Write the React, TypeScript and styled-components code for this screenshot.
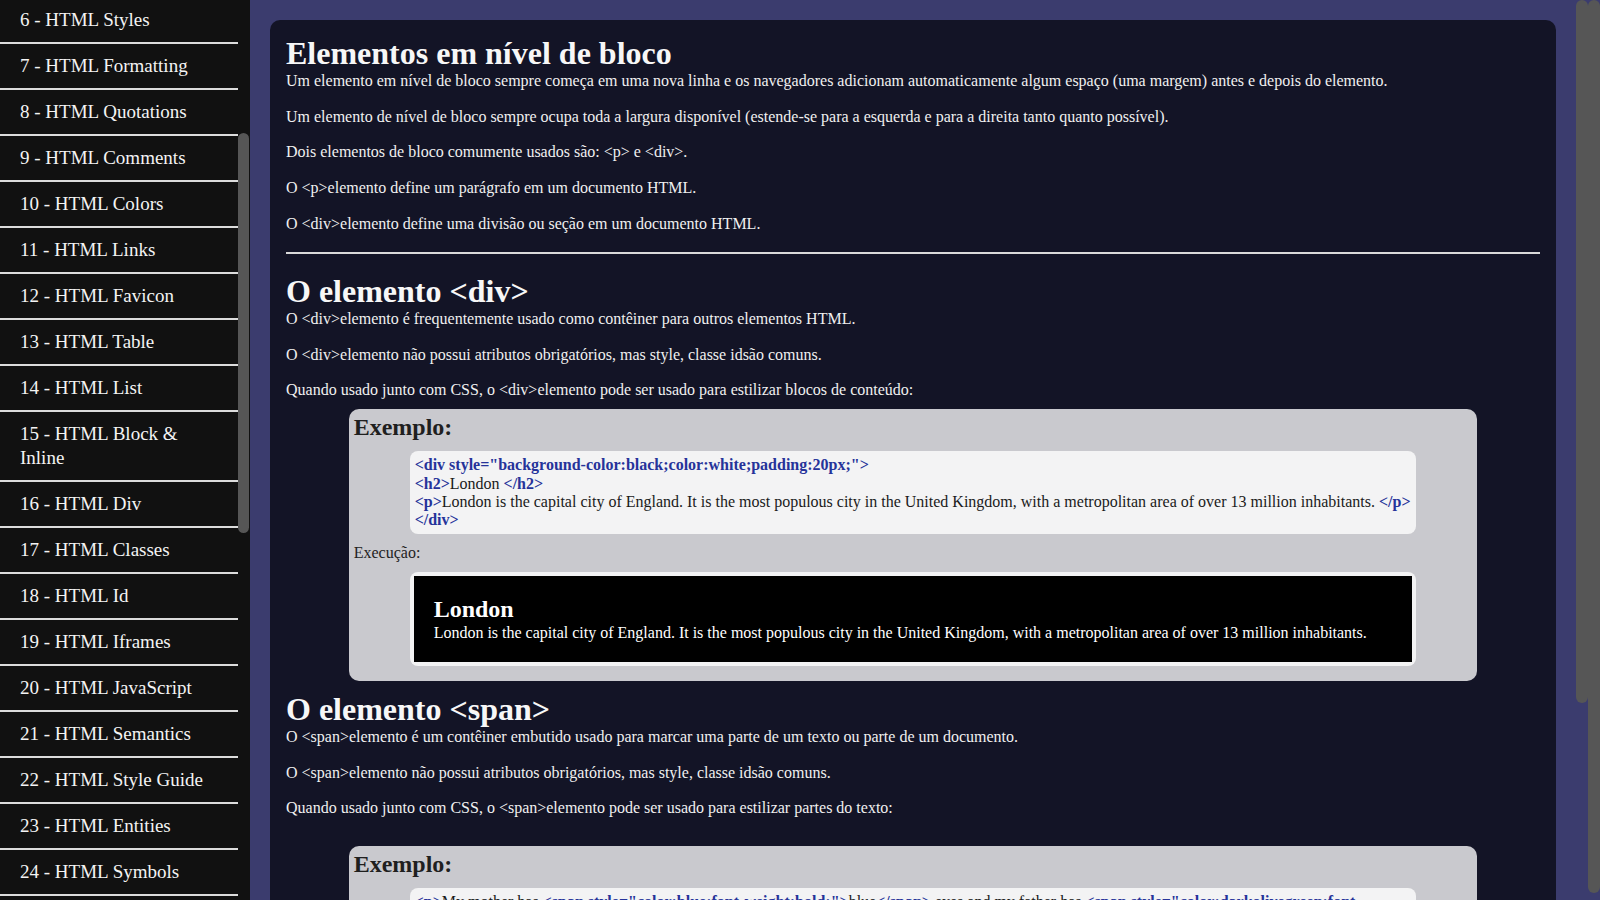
import React, { useLayoutEffect, useRef } from "react";
import styled, { createGlobalStyle } from "styled-components";

const GlobalStyle = createGlobalStyle`
  html {
    background: #3b3c6e;
  }
  body {
    margin: 0;
    overflow: hidden;
    font-family: "Liberation Serif", "Times New Roman", serif;
  }
`;

const Layout = styled.div`
  display: flex;
  height: 100vh;
  background: #3b3c6e;
`;

const Sidebar = styled.nav`
  flex: none;
  width: 250px;
  display: flex;
  background: #111111;
`;

const SideList = styled.div`
  position: relative;
  flex: 1;
  min-width: 0;
  overflow: hidden;
`;

const ScrollRail = styled.div<{ $bg: string }>`
  flex: none;
  width: 12px;
  display: flex;
  flex-direction: column;
  background: ${(p) => p.$bg};
`;

const Thumb = styled.div<{ $offset: number; $length: number; $inset?: number }>`
  margin-top: ${(p) => p.$offset}px;
  margin-right: ${(p) => p.$inset ?? 0}px;
  height: ${(p) => p.$length}px;
  background: #565656;
  border-radius: 6px;
`;

const SidebarHeader = styled.div`
  height: 67px;
  display: flex;
  align-items: center;
  padding: 0 20px;
  color: #ffffff;
  font-size: 24px;
  font-weight: bold;
`;

const NavItem = styled.a`
  display: block;
  padding: 10px 20px;
  font-size: 19px;
  line-height: 24px;
  color: #f4f4f4;
  text-decoration: none;
  border-bottom: 2px solid #dcdcdc;
`;

const Main = styled.main`
  flex: 1;
  min-width: 0;
  overflow: hidden;
  padding: 20px;
`;

const Card = styled.article`
  background: #131426;
  border-radius: 10px;
  padding: 15px 16px 80px;
  color: #f2f2f2;
`;

const Heading = styled.h1`
  margin: 0;
  font-size: 32px;
  font-weight: bold;
  line-height: 36.8px;
  color: #f7f7f7;
`;

const Text = styled.p`
  margin: 0;
  font-size: 16px;
  line-height: 18.4px;
  color: #f0f0f0;

  & + & {
    margin-top: 17.3px;
  }
`;

const Rule = styled.hr`
  margin: 19px 0;
  border: none;
  height: 2px;
  background: #d9d9d9;
`;

const ExampleBox = styled.section<{ $top: number }>`
  width: 90%;
  margin: ${(p) => p.$top}px auto 10px;
  padding: 5px;
  box-sizing: border-box;
  background: #c9c9ce;
  border-radius: 10px;
  color: #1c1c1c;
`;

const ExampleTitle = styled.h2`
  margin: 0;
  font-size: 24px;
  line-height: 27.6px;
  font-weight: bold;
  color: #1f1f1f;
`;

const CodeBox = styled.div`
  width: 90%;
  margin: 10px auto 0;
  padding: 5px 5px 4px;
  box-sizing: border-box;
  background: #f3f3f4;
  border-radius: 8px;
  font-size: 16px;
  line-height: 18.4px;
  color: #1a1a1a;
`;

const Tag = styled.span`
  color: #26339a;
  font-weight: bold;
`;

const RunLabel = styled.div`
  margin-top: 10px;
  font-size: 16px;
  line-height: 18.4px;
  color: #222222;
`;

const OutputFrame = styled.div`
  width: 90%;
  margin: 10px auto;
  padding: 4px;
  box-sizing: border-box;
  background: #f3f3f4;
  border-radius: 8px;
`;

const OutputBlack = styled.div`
  background: #000000;
  color: #ffffff;
  padding: 20px;
`;

const OutputTitle = styled.h2`
  margin: 0;
  font-size: 24px;
  line-height: 27.6px;
  font-weight: bold;
`;

const OutputText = styled.p`
  margin: 0;
  font-size: 16px;
  line-height: 18.4px;
`;

const OutputPlain = styled.p`
  margin: 0;
  padding: 20px;
  background: #ffffff;
  color: #000000;
  font-size: 16px;
  line-height: 18.4px;
`;

const Blue = styled.span`
  color: blue;
  font-weight: bold;
`;

const Olive = styled.span`
  color: darkolivegreen;
  font-weight: bold;
`;

const topics = [
  "HTML Introduction",
  "HTML Editors",
  "HTML Basic",
  "HTML Elements",
  "HTML Attributes",
  "HTML Styles",
  "HTML Formatting",
  "HTML Quotations",
  "HTML Comments",
  "HTML Colors",
  "HTML Links",
  "HTML Favicon",
  "HTML Table",
  "HTML List",
  "HTML Block & Inline",
  "HTML Div",
  "HTML Classes",
  "HTML Id",
  "HTML Iframes",
  "HTML JavaScript",
  "HTML Semantics",
  "HTML Style Guide",
  "HTML Entities",
  "HTML Symbols",
  "HTML Emojis",
  "HTML Charsets",
  "HTML URL Encode",
  "HTML vs. XHTML",
  "HTML Forms",
  "HTML Inputs",
  "HTML Canvas",
  "HTML SVG",
  "HTML Media",
  "HTML Video",
  "HTML Audio",
  "HTML Plugins",
  "HTML YouTube",
  "HTML Geolocation",
  "HTML Drag/Drop",
  "HTML Storage",
  "HTML Workers",
  "HTML SSE",
];

export default function App() {
  const sideRef = useRef<HTMLDivElement>(null);

  useLayoutEffect(() => {
    const side = sideRef.current;
    if (!side) return;
    const target = side.querySelector<HTMLElement>('[data-idx="6"]');
    if (target) side.scrollTop = target.offsetTop + 2;
  }, []);

  return (
    <>
      <GlobalStyle />
      <Layout>
        <Sidebar>
          <SideList ref={sideRef}>
            <SidebarHeader>Sumário</SidebarHeader>
            {topics.map((t, i) => (
              <NavItem key={t} href="#" data-idx={i + 1}>
                {i + 1} - {t}
              </NavItem>
            ))}
          </SideList>
          <ScrollRail $bg="#111111">
            <Thumb $offset={133} $length={400} $inset={1} />
          </ScrollRail>
        </Sidebar>
        <Main>
          <Card>
            <Heading>Elementos em nível de bloco</Heading>
            <Text>
              Um elemento em nível de bloco sempre começa em uma nova linha e os navegadores adicionam
              automaticamente algum espaço (uma margem) antes e depois do elemento.
            </Text>
            <Text>
              Um elemento de nível de bloco sempre ocupa toda a largura disponível (estende-se para a
              esquerda e para a direita tanto quanto possível).
            </Text>
            <Text>Dois elementos de bloco comumente usados são: &lt;p&gt; e &lt;div&gt;.</Text>
            <Text>O &lt;p&gt;elemento define um parágrafo em um documento HTML.</Text>
            <Text>O &lt;div&gt;elemento define uma divisão ou seção em um documento HTML.</Text>

            <Rule />

            <Heading>O elemento &lt;div&gt;</Heading>
            <Text>O &lt;div&gt;elemento é frequentemente usado como contêiner para outros elementos HTML.</Text>
            <Text>O &lt;div&gt;elemento não possui atributos obrigatórios, mas style, classe idsão comuns.</Text>
            <Text>
              Quando usado junto com CSS, o &lt;div&gt;elemento pode ser usado para estilizar blocos de
              conteúdo:
            </Text>

            <ExampleBox $top={9}>
              <ExampleTitle>Exemplo:</ExampleTitle>
              <CodeBox>
                <Tag>&lt;div style="background-color:black;color:white;padding:20px;"&gt;</Tag>
                <br />
                <Tag>&lt;h2&gt;</Tag>London <Tag>&lt;/h2&gt;</Tag>
                <br />
                <Tag>&lt;p&gt;</Tag>London is the capital city of England. It is the most populous city in
                the United Kingdom, with a metropolitan area of over 13 million inhabitants.{" "}
                <Tag>&lt;/p&gt;</Tag>
                <br />
                <Tag>&lt;/div&gt;</Tag>
              </CodeBox>
              <RunLabel>Execução:</RunLabel>
              <OutputFrame>
                <OutputBlack>
                  <OutputTitle>London</OutputTitle>
                  <OutputText>
                    London is the capital city of England. It is the most populous city in the United
                    Kingdom, with a metropolitan area of over 13 million inhabitants.
                  </OutputText>
                </OutputBlack>
              </OutputFrame>
            </ExampleBox>

            <Heading>O elemento &lt;span&gt;</Heading>
            <Text>
              O &lt;span&gt;elemento é um contêiner embutido usado para marcar uma parte de um texto ou parte
              de um documento.
            </Text>
            <Text>O &lt;span&gt;elemento não possui atributos obrigatórios, mas style, classe idsão comuns.</Text>
            <Text>
              Quando usado junto com CSS, o &lt;span&gt;elemento pode ser usado para estilizar partes do
              texto:
            </Text>

            <ExampleBox $top={28}>
              <ExampleTitle>Exemplo:</ExampleTitle>
              <CodeBox>
                <Tag>&lt;p&gt;</Tag>My mother has{" "}
                <Tag>&lt;span style="color:blue;font-weight:bold;"&gt;</Tag>blue<Tag>&lt;/span&gt;</Tag> eyes
                and my father has <Tag>&lt;span style="color:darkolivegreen;font-weight:bold;"&gt;</Tag>dark
                green<Tag>&lt;/span&gt;</Tag> eyes.<Tag>&lt;/p&gt;</Tag>
              </CodeBox>
              <RunLabel>Execução:</RunLabel>
              <OutputFrame>
                <OutputPlain>
                  My mother has <Blue>blue</Blue> eyes and my father has <Olive>dark green</Olive> eyes.
                </OutputPlain>
              </OutputFrame>
            </ExampleBox>
          </Card>
        </Main>
        <ScrollRail $bg="transparent">
          <Thumb $offset={0} $length={703} />
        </ScrollRail>
        <ScrollRail $bg="transparent">
          <Thumb $offset={0} $length={893} />
        </ScrollRail>
      </Layout>
    </>
  );
}
